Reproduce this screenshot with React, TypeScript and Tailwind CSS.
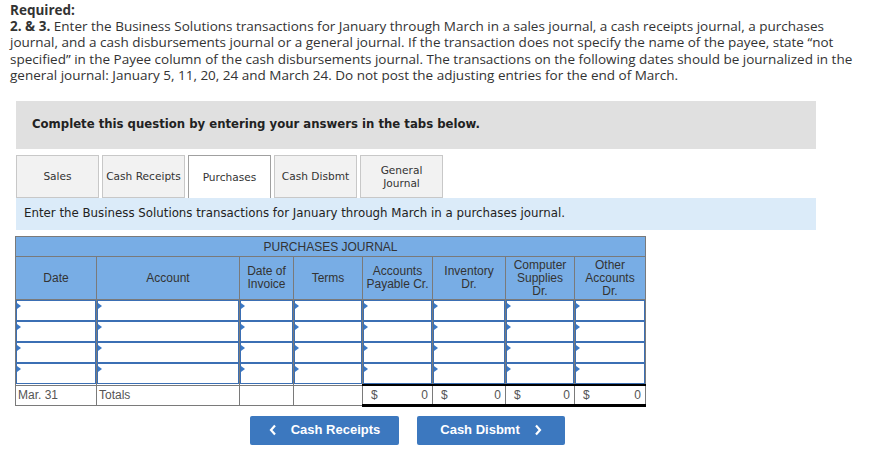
import React from "react";

const cols = [
  { label: ["Date"], w: "w-[81px]" },
  { label: ["Account"], w: "w-[143px]" },
  { label: ["Date of", "Invoice"], w: "w-[54px]" },
  { label: ["Terms"], w: "w-[69px]" },
  { label: ["Accounts", "Payable Cr."], w: "w-[70px]" },
  { label: ["Inventory", "Dr."], w: "w-[73px]" },
  { label: ["Computer", "Supplies", "Dr."], w: "w-[69px]" },
  { label: ["Other", "Accounts", "Dr."], w: "w-[71px]" },
];

const tabs = ["Sales", "Cash Receipts", "Purchases", "Cash Disbmt", "General Journal"];

function InputCell() {
  return (
    <td className="p-0 border-x border-[#7a7a7a]">
      <div className="relative h-[21px] border border-[#3b6fb4] bg-white">
        <span className="absolute left-0 top-[2px] w-0 h-0 border-y-[3px] border-y-transparent border-l-[4px] border-l-[#3b78c4]" />
      </div>
    </td>
  );
}

function MoneyCell() {
  return (
    <td className="p-0 border-x border-[#7a7a7a] border-t-2 border-t-black border-b-[3px] border-b-black">
      <div className="flex justify-between h-[17px] items-center px-[4px] text-[12px] text-[#555]">
        <span className="pl-[4px]">$</span>
        <span>0</span>
      </div>
    </td>
  );
}

export default function App() {
  return (
    <div className="w-[875px] h-[471px] bg-white text-[#333] overflow-hidden">
      {/* Question text */}
      <div className="px-[10px] pt-[2px] text-[13.5px] leading-[16.2px] whitespace-nowrap font-[family-name:'Open_Sans',sans-serif]">
        <p className="font-bold">Required:</p>
        <p>
          <b>2. &amp; 3.</b> Enter the Business Solutions transactions for January through March in a sales journal, a cash receipts journal, a purchases
          <br />
          journal, and a cash disbursements journal or a general journal. If the transaction does not specify the name of the payee, state “not
          <br />
          specified” in the Payee column of the cash disbursements journal. The transactions on the following dates should be journalized in the
          <br />
          general journal: January 5, 11, 20, 24 and March 24. Do not post the adjusting entries for the end of March.
        </p>
      </div>

      <div className="ml-[16px] w-[800px] font-[family-name:'DejaVu_Sans',Verdana,sans-serif]">
        <div className="mt-[18px] h-[48px] bg-[#e0e0e0] flex items-center px-[16px] text-[11.7px] font-bold text-[#222]">
          Complete this question by entering your answers in the tabs below.
        </div>

        {/* Tabs */}
        <div className="mt-[6px] flex gap-[3px] h-[43px]">
          {tabs.map((t) => (
            <div
              key={t}
              className={`w-[83px] flex items-center justify-center text-center text-[10.6px] leading-[13px] border ${
                t === "Purchases" ? "bg-white border-[#a0a0a0] border-b-0" : "bg-[#f2f2f2] border-[#c8c8c8]"
              }`}
            >
              {t === "General Journal" ? (
                <span>
                  General
                  <br />
                  Journal
                </span>
              ) : (
                t
              )}
            </div>
          ))}
        </div>

        <div className="h-[32px] bg-[#dbebf9] flex items-center px-[8px] text-[11.8px] text-[#222]">
          Enter the Business Solutions transactions for January through March in a purchases journal.
        </div>
      </div>

      {/* Journal */}
      <table className="ml-[15px] mt-[6px] border-collapse table-fixed w-[630px] font-[family-name:'Liberation_Sans',Arial,sans-serif] text-[12px] text-[#333]">
        <colgroup>
          {cols.map((c, i) => (
            <col key={i} className={c.w} />
          ))}
        </colgroup>
        <thead>
          <tr>
            <th colSpan={8} className="h-[20px] bg-[#78ade5] font-normal border border-[#7a7a7a] text-[12px]">
              PURCHASES JOURNAL
            </th>
          </tr>
          <tr>
            {cols.map((c, i) => (
              <th key={i} className="h-[43px] bg-[#78ade5] font-normal border border-[#7a7a7a] leading-[13px] p-0">
                {c.label.map((l) => (
                  <div key={l}>{l}</div>
                ))}
              </th>
            ))}
          </tr>
        </thead>
        <tbody>
          {[0, 1, 2, 3].map((r) => (
            <tr key={r}>
              {cols.map((_, i) => (
                <InputCell key={i} />
              ))}
            </tr>
          ))}
          <tr>
            <td className="h-[20px] border border-[#7a7a7a] px-[2px] text-[#555]">Mar. 31</td>
            <td className="border border-[#7a7a7a] px-[2px] text-[#555]">Totals</td>
            <td className="border border-[#7a7a7a]" />
            <td className="border border-[#7a7a7a]" />
            <MoneyCell />
            <MoneyCell />
            <MoneyCell />
            <MoneyCell />
          </tr>
        </tbody>
      </table>

      {/* Navigation */}
      <div className="ml-[250px] mt-[9px] flex gap-[18px] font-[family-name:'Liberation_Sans',Arial,sans-serif]">
        <button className="w-[149px] h-[29px] bg-[#3c78bf] rounded-[2px] text-white text-[13px] font-bold flex items-center justify-center gap-[14px]">
          <svg width="8" height="12" viewBox="0 0 8 12">
            <path d="M6 1.5 L2 6 L6 10.5" stroke="white" strokeWidth="2.2" fill="none" />
          </svg>
          Cash Receipts
        </button>
        <button className="w-[148px] h-[29px] bg-[#3c78bf] rounded-[2px] text-white text-[13px] font-bold flex items-center justify-center gap-[14px]">
          Cash Disbmt
          <svg width="8" height="12" viewBox="0 0 8 12">
            <path d="M2 1.5 L6 6 L2 10.5" stroke="white" strokeWidth="2.2" fill="none" />
          </svg>
        </button>
      </div>
    </div>
  );
}
